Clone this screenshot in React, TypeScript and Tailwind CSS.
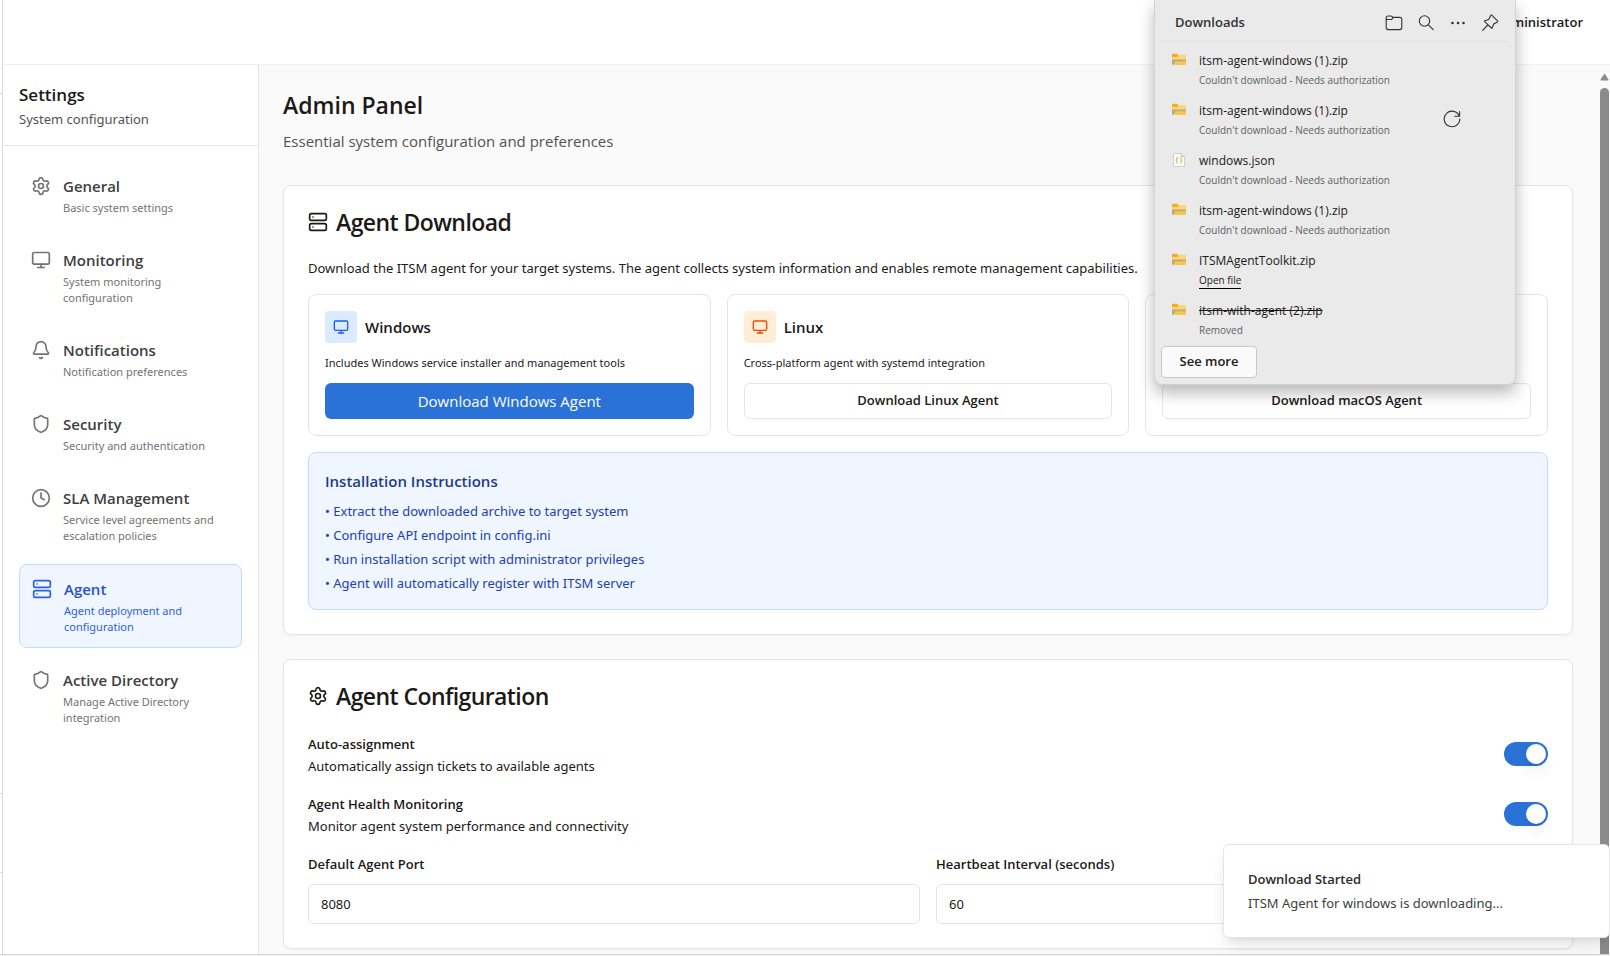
import { useState, type ReactNode } from "react";
import { Bell, Clock, Monitor, Server, Settings, Shield, type LucideIcon } from "lucide-react";

type NavItem = { icon: LucideIcon; label: string; text: string; active?: boolean };

const navItems: NavItem[] = [
  { icon: Settings, label: "General", text: "Basic system settings" },
  { icon: Monitor, label: "Monitoring", text: "System monitoring configuration" },
  { icon: Bell, label: "Notifications", text: "Notification preferences" },
  { icon: Shield, label: "Security", text: "Security and authentication" },
  { icon: Clock, label: "SLA Management", text: "Service level agreements and escalation policies" },
  { icon: Server, label: "Agent", text: "Agent deployment and configuration", active: true },
  { icon: Shield, label: "Active Directory", text: "Manage Active Directory integration" },
];

const steps = [
  "Extract the downloaded archive to target system",
  "Configure API endpoint in config.ini",
  "Run installation script with administrator privileges",
  "Agent will automatically register with ITSM server",
];

function NavLink({ icon: Icon, label, text, active }: NavItem) {
  return (
    <a
      href="#"
      aria-current={active ? "page" : undefined}
      className={
        active
          ? "flex items-start gap-3 rounded-lg border border-blue-200 bg-[#eff6ff] p-3 text-[#2f5fe0]"
          : "flex items-start gap-3 rounded-lg p-3 text-neutral-500"
      }
    >
      <Icon className="mt-0.5 size-5 shrink-0" strokeWidth={2} />
      <span className="min-w-0 flex-1">
        <span className={active ? "block text-[15px] leading-6 font-semibold text-[#2a50cf]" : "block text-[15px] leading-6 font-semibold text-neutral-700"}>
          {label}
        </span>
        <span className="mt-0.5 block font-['Noto_Sans',sans-serif] text-[11px] leading-4">{text}</span>
      </span>
    </a>
  );
}

function Card({ icon: Icon, title, children }: { icon: LucideIcon; title: string; children: ReactNode }) {
  return (
    <section className="rounded-lg border border-[#e5e5e5] bg-white p-6 shadow-xs">
      <h2 className="flex items-center gap-2 text-[23px] leading-6 font-semibold tracking-tight">
        <Icon className="size-5 shrink-0" />
        {title}
      </h2>
      <div className="mt-6 flex flex-col gap-4">{children}</div>
    </section>
  );
}

function DownloadButton({ name, primary }: { name: string; primary?: boolean }) {
  return (
    <button
      type="button"
      className={
        primary
          ? "mt-auto h-9 w-full rounded-md bg-[#2a72d8] text-[15px] text-white"
          : "mt-auto h-9 w-full rounded-md border border-[#e5e5e5] bg-white text-[13px] font-semibold"
      }
    >
      Download {name} Agent
    </button>
  );
}

function Platform({ name, text, tile, primary }: { name: string; text: string; tile: string; primary?: boolean }) {
  return (
    <div className="flex flex-col rounded-lg border border-[#e5e5e5] p-4">
      <div className="flex items-center gap-2">
        <span className={`grid size-8 place-items-center rounded-sm ${tile}`}>
          <Monitor className="size-4" />
        </span>
        <h3 className="text-[15px] leading-6 font-semibold">{name}</h3>
      </div>
      <p className="my-3 font-['Noto_Sans',sans-serif] text-[11px] leading-4">{text}</p>
      <DownloadButton name={name} primary={primary} />
    </div>
  );
}

function Toggle({ id, label, text }: { id: string; label: string; text: string }) {
  const [on, setOn] = useState(true);
  return (
    <div className="flex items-center justify-between">
      <div>
        <label htmlFor={id} className="block text-[13px] leading-6 font-semibold">
          {label}
        </label>
        <p className="font-['Noto_Sans',sans-serif] text-[13px] leading-5">{text}</p>
      </div>
      <input
        id={id}
        type="checkbox"
        role="switch"
        checked={on}
        onChange={() => setOn(!on)}
        className="h-6 w-11 appearance-none rounded-full bg-neutral-200 p-0.5 before:block before:size-5 before:rounded-full before:bg-white before:shadow-lg checked:bg-[#2a72d8] checked:before:translate-x-5"
      />
    </div>
  );
}

function Field({ id, label, value }: { id: string; label: string; value: string }) {
  return (
    <div>
      <label htmlFor={id} className="block text-[13px] leading-6 font-semibold">
        {label}
      </label>
      <input
        id={id}
        defaultValue={value}
        className="mt-2 block h-10 w-full rounded-md border border-[#e5e5e5] bg-white px-3 font-['Noto_Sans',sans-serif] text-[13px]"
      />
    </div>
  );
}

function ZipIcon() {
  return (
    <svg viewBox="0 0 16 16" className="size-4 shrink-0">
      <path d="M1 2.5q0-.8.8-.8h4.4L7.600 3v3H1z" fill="#eeb02a" />
      <path d="M1 5h5.600l1.400-2h6.200q.8 0 .8.8V12q0 1-1 1H2q-1 0-1-1z" fill="#fcd671" />
      <path d="M4 10h11v2q0 1-1 1H4z" fill="#f7c646" />
      <path d="M1 7.500h14v2H1z" fill="#bda97c" />
      <path d="M1 9h3v2.500H3v1.300H1z" fill="#b5a98e" />
    </svg>
  );
}

function JsonIcon() {
  return (
    <svg viewBox="0 0 16 16" className="size-4 shrink-0">
      <path d="M2.500 1.500h8l3 3v10h-11z" fill="#fbfbfb" stroke="#d0d0d0" />
      <path d="M10.500 1.500v3h3" fill="#e4e4e4" stroke="#c4c4c4" />
      <path d="M7 5.500q-1.200 0-1.200 1v1.200l-.6.600.6.600V10q0 1 1.200 1M9 5.500q1.200 0 1.200 1v1.200l.6.600-.6.600V10q0 1-1.200 1" fill="none" stroke="#c9c25e" strokeWidth="1.200" />
    </svg>
  );
}

const stroke = { fill: "none", stroke: "#333", strokeWidth: 1.1, strokeLinecap: "round", strokeLinejoin: "round" } as const;

const tools = [
  {
    label: "Open downloads folder",
    art: (
      <>
        <path d="M1.200 4q0-2 2-2h2.600q.6 0 1 .4L8 3.400h6.800q2 0 2 2v8.200q0 2-2 2H3.200q-2 0-2-2z" />
        <path d="M1.200 5.500h4.700q.6 0 1-.4L8 3.400" />
      </>
    ),
  },
  {
    label: "Search downloads",
    art: (
      <>
        <circle cx="7.500" cy="7" r="5.200" />
        <path d="m11.300 10.800 4.900 4.900" />
      </>
    ),
  },
  {
    label: "More options",
    art: (
      <g fill="#333" stroke="none">
        <circle cx="3.500" cy="9" r="1.300" />
        <circle cx="9" cy="9" r="1.300" />
        <circle cx="14.500" cy="9" r="1.300" />
      </g>
    ),
  },
  {
    label: "Pin downloads",
    art: <path d="m11 1.300 5.500 5.500q.6.800-.4 1.400l-3.500 1.800-1.300 3.900q-.3.600-.9.100L3.700 7.700q-.5-.6.100-.9l3.900-1.300 1.900-3.800q.6-1 1.400-.4zM6.800 11l-5.200 5.300" />,
  },
];

type Download = { name: string; status: string; kind?: "json"; open?: boolean; removed?: boolean; retry?: boolean };

const failed = "Couldn't download - Needs authorization";
const downloads: Download[] = [
  { name: "itsm-agent-windows (1).zip", status: failed },
  { name: "itsm-agent-windows (1).zip", status: failed, retry: true },
  { name: "windows.json", status: failed, kind: "json" },
  { name: "itsm-agent-windows (1).zip", status: failed },
  { name: "ITSMAgentToolkit.zip", status: "Open file", open: true },
  { name: "itsm-with-agent (2).zip", status: "Removed", removed: true },
];

function DownloadsPanel() {
  return (
    <aside className="absolute top-0 right-[94px] w-[362px] rounded-b-lg border border-t-0 border-[#d2d2d2] bg-[#eaeaea] px-1.5 pb-1.5 shadow-[0_8px_16px_rgba(0,0,0,0.28)]">
      <div className="flex h-[42px] items-center justify-between border-b border-[#e2e2e2] pt-1 pr-2.5 pl-3.5">
        <h2 className="text-[13px] font-semibold text-[#333]">Downloads</h2>
        <div className="flex items-center gap-3.5">
          {tools.map((t) => (
            <button key={t.label} type="button" aria-label={t.label}>
              <svg viewBox="0 0 18 18" className="size-[18px]" {...stroke}>
                {t.art}
              </svg>
            </button>
          ))}
        </div>
      </div>
      <ul className="flex flex-col gap-3 pt-2">
        {downloads.map((d, i) => (
          <li key={i} className="flex h-[38px] items-start gap-3 pt-0.5 pl-2.5">
            {d.kind === "json" ? <JsonIcon /> : <ZipIcon />}
            <div className="min-w-0 flex-1">
              <p className={d.removed ? "text-[12px] leading-[18px] line-through" : "text-[12px] leading-[18px]"}>{d.name}</p>
              {d.open ? (
                <a href="#" className="mt-0.5 block w-fit border-b border-black text-[10px] leading-4">
                  {d.status}
                </a>
              ) : (
                <p className="mt-0.5 text-[10px] leading-4 text-[#616161]">{d.status}</p>
              )}
            </div>
            {d.retry && (
              <button type="button" aria-label="Retry download" className="mt-2 mr-12">
                <svg viewBox="0 0 18 18" className="size-[18px]" {...stroke}>
                  <path d="M16.300 6.200A7.800 7.800 0 1 0 16.800 9M16.600 1.500v4.800h-4.800" />
                </svg>
              </button>
            )}
          </li>
        ))}
      </ul>
      <button type="button" className="mt-2 h-8 w-24 rounded-sm border border-[#c8c8c8] bg-[#fafafa] text-[13px] font-semibold">
        See more
      </button>
    </aside>
  );
}

export default function App() {
  return (
    <div className="relative flex h-screen flex-col overflow-hidden bg-white font-['Open_Sans','Noto_Sans',sans-serif] text-[#1c1917]">
      <div className="flex min-h-0 flex-1">
        <div className="flex w-[3px] shrink-0 flex-col border-r border-[#dcdcdc]">
          <div className="h-[94px] border-b border-[#dcdcdc]" />
          <div className="h-[700px] border-b border-[#dcdcdc]" />
          <div className="h-[79px] border-b border-[#dcdcdc]" />
        </div>
        <div className="flex min-w-0 flex-1 flex-col">
          <header className="flex h-[65px] shrink-0 items-start justify-end border-b border-[#f0f0f0] pt-3 pr-[27px]">
            <span className="text-[13px] leading-5 font-semibold">Administrator</span>
          </header>
          <div className="flex min-h-0 flex-1">
            <nav className="w-64 shrink-0 border-r border-[#e5e5e5]">
              <div className="border-b border-[#e5e5e5] p-4">
                <h2 className="text-[17px] leading-7 font-semibold">Settings</h2>
                <p className="font-['Noto_Sans',sans-serif] text-[13px] leading-5 text-neutral-600">System configuration</p>
              </div>
              <div className="flex flex-col gap-2 p-4">
                {navItems.map((item) => (
                  <NavLink key={item.label} {...item} />
                ))}
              </div>
            </nav>
            <main className="min-w-0 flex-1 overflow-hidden bg-[#fafafa] p-6">
              <h1 className="text-[23px] leading-8 font-semibold">Admin Panel</h1>
              <p className="mt-2 text-[15px] leading-6 text-neutral-600">Essential system configuration and preferences</p>
              <div className="mt-8 flex flex-col gap-6">
                <Card icon={Server} title="Agent Download">
                  <p className="font-['Noto_Sans',sans-serif] text-[13px] leading-5">
                    Download the ITSM agent for your target systems. The agent collects system information and enables remote management capabilities.
                  </p>
                  <div className="grid grid-cols-3 gap-4">
                    <Platform name="Windows" text="Includes Windows service installer and management tools" tile="bg-blue-100 text-blue-600" primary />
                    <Platform name="Linux" text="Cross-platform agent with systemd integration" tile="bg-[#ffedd5] text-orange-600" />
                    <div className="flex flex-col rounded-lg border border-[#e5e5e5] p-4">
                      <DownloadButton name="macOS" />
                    </div>
                  </div>
                  <div className="rounded-lg border border-[#bfdbfe] bg-[#eff6ff] p-4">
                    <h3 className="text-[15px] leading-6 font-semibold text-[#1e3a8a]">Installation Instructions</h3>
                    <ul className="mt-2 flex flex-col gap-1 font-['Noto_Sans',sans-serif] text-[13px] leading-5 text-[#1e40af]">
                      {steps.map((s) => (
                        <li key={s}>• {s}</li>
                      ))}
                    </ul>
                  </div>
                </Card>
                <Card icon={Settings} title="Agent Configuration">
                  <Toggle id="auto" label="Auto-assignment" text="Automatically assign tickets to available agents" />
                  <Toggle id="health" label="Agent Health Monitoring" text="Monitor agent system performance and connectivity" />
                  <div className="grid grid-cols-2 gap-4">
                    <Field id="port" label="Default Agent Port" value="8080" />
                    <Field id="beat" label="Heartbeat Interval (seconds)" value="60" />
                  </div>
                </Card>
              </div>
            </main>
            <div className="flex w-[13px] shrink-0 flex-col items-center bg-[#fafafa] pt-2 pl-0.5">
              <svg viewBox="0 0 9 8" className="h-2 w-[9px] shrink-0">
                <path d="M4.500.5 8.500 6.500q.2.900-.6.900H1.100Q.3 7.400.5 6.500z" fill="#8b8b8b" />
              </svg>
              <div className="mt-[7px] w-[9px] flex-1 rounded-t-full bg-[#8b8b8b]" />
            </div>
          </div>
        </div>
      </div>
      <footer className="h-0.5 shrink-0 border-t border-[#d4d4d4] bg-[#f0f0f0]" />

      <DownloadsPanel />

      <div role="status" className="absolute right-0 bottom-[18px] w-[387px] rounded-md border border-[#e5e5e5] bg-white p-6 shadow-lg">
        <p className="text-[13px] leading-5 font-semibold text-[#2a2a2a]">Download Started</p>
        <p className="mt-1 font-['Noto_Sans',sans-serif] text-[13px] leading-5 text-[#404040]">ITSM Agent for windows is downloading...</p>
      </div>
    </div>
  );
}
